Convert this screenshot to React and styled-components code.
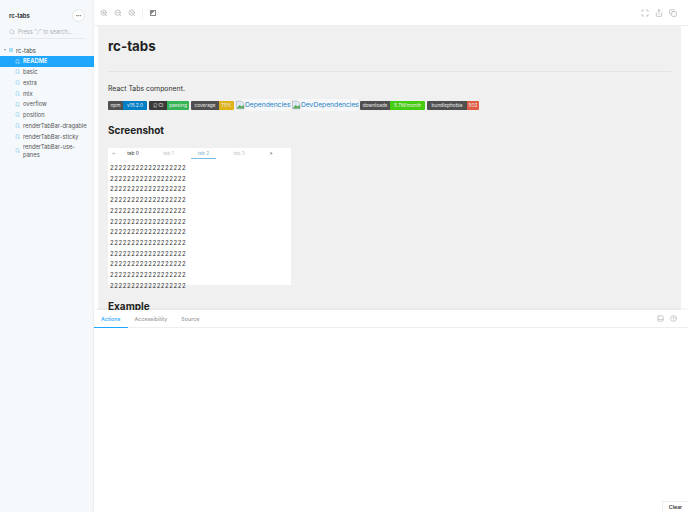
import React from 'react';
import styled, { createGlobalStyle } from 'styled-components';
import { ZoomIn, ZoomOut, SearchX, Maximize, Share, Copy, PanelBottom, CircleHelp, Search, Bookmark, Github } from 'lucide-react';

const Global = createGlobalStyle`
  html, body { margin: 0; padding: 0; background: #fff; }
  * { box-sizing: border-box; }
  body { font-family: "Inter", "Liberation Sans", sans-serif; color: #333; }
`;

const Root = styled.div`
  width: 688px;
  height: 512px;
  display: flex;
  overflow: hidden;
`;

const Sidebar = styled.aside`
  width: 94px;
  flex: none;
  background: #f6f9fc;
  display: flex;
  flex-direction: column;
`;

const Brand = styled.div`
  display: flex;
  align-items: center;
  justify-content: space-between;
  padding: 8px 9px 0 9px;
  height: 23px;
  font-size: 5.8px;
  font-weight: 700;
  color: #333;
`;

const MenuDot = styled.div`
  width: 13px;
  height: 13px;
  border-radius: 50%;
  background: #fff;
  border: 1px solid #e2e5e8;
  display: flex;
  align-items: center;
  justify-content: center;
  font-size: 4px;
  font-weight: 700;
  line-height: 1;
  color: #777;
`;

const SearchBox = styled.div`
  margin: 3px 9px 0 9px;
  height: 13px;
  border-bottom: 1px solid #e6e9ec;
  display: flex;
  align-items: center;
  gap: 3px;
  font-size: 5.6px;
  color: #aab0b5;
`;

const Tree = styled.div`
  margin-top: 6px;
  display: flex;
  flex-direction: column;
`;

const TreeRoot = styled.div`
  height: 10.75px;
  display: flex;
  align-items: center;
  padding-left: 4px;
  gap: 2px;
  font-size: 5.8px;
  color: #444;
`;

const Caret = styled.span`
  width: 0;
  height: 0;
  border-left: 1.5px solid transparent;
  border-right: 1.5px solid transparent;
  border-top: 2px solid #999;
`;

const Square = styled.span`
  width: 4px;
  height: 4px;
  margin: 0 1px;
  background: #a6dcf5;
`;

const TreeItem = styled.div`
  min-height: 10.75px;
  display: flex;
  align-items: center;
  gap: 3px;
  padding: ${p => (p.$wrap ? '1.5px 5px 1.5px 15px' : '0 0 0 15px')};
  font-size: 5.8px;
  line-height: 7.4px;
  white-space: ${p => (p.$wrap ? 'normal' : 'nowrap')};
  background: ${p => (p.$active ? '#1ea7fd' : 'transparent')};
  color: ${p => (p.$active ? '#fff' : '#555')};
  font-weight: ${p => (p.$active ? 600 : 400)};
  svg { flex: none; color: ${p => (p.$active ? '#fff' : '#62bfe8')}; }
`;

const Main = styled.main`
  flex: 1;
  min-width: 0;
  display: flex;
  flex-direction: column;
  background: #fff;
  box-shadow: 0 0 3px rgba(0, 0, 0, 0.08);
`;

const Toolbar = styled.div`
  height: 26px;
  flex: none;
  display: flex;
  align-items: center;
  justify-content: space-between;
  padding: 0 11px 0 6px;
  border-bottom: 1px solid #eee;
`;

const IconGroup = styled.div`
  display: flex;
  align-items: center;
  gap: 6px;
  color: #aaa;
`;

const Divider = styled.span`
  width: 1px;
  height: 10px;
  margin: 0 1px 0 0;
  background: #f3f3f3;
`;

const BgIcon = styled.span`
  width: 6px;
  height: 6px;
  border: 1px solid #888;
  background: linear-gradient(135deg, #888 50%, #fff 50%);
`;

const PreviewWrap = styled.div`
  flex: 1;
  min-height: 0;
  padding-left: 4px;
  padding-right: 7px;
`;

const Preview = styled.div`
  height: 100%;
  background: #f0f0f0;
  padding: 0 10px;
  overflow: hidden;
  color: #222;
`;

const Title = styled.h1`
  margin: 0;
  padding-top: 10px;
  padding-bottom: 15px;
  font-size: 13.3px;
  line-height: 20px;
  font-weight: 700;
  border-bottom: 1px solid #e4e4e4;
`;

const Intro = styled.p`
  margin: 12px 0 0;
  font-size: 6.9px;
  line-height: 10px;
  color: #333;
`;

const BadgeRow = styled.div`
  margin-top: 6px;
  height: 10px;
  display: flex;
  align-items: center;
  gap: 2px;
`;

const Badge = styled.div`
  display: flex;
  height: 9px;
  font-size: 4.8px;
  line-height: 9px;
  border-radius: 1px;
  overflow: hidden;
  color: #eee;
  white-space: nowrap;
`;

const BadgeLabel = styled.span`
  width: ${p => p.$w}px;
  background: ${p => p.$dark ? '#3a3a3a' : '#505050'};
  text-align: center;
  display: flex;
  align-items: center;
  justify-content: center;
  gap: 1px;
`;

const BadgeValue = styled.span`
  width: ${p => p.$w}px;
  background: ${p => p.$color};
  text-align: center;
`;

const BrokenLink = styled.a`
  display: flex;
  align-items: center;
  width: ${p => p.$w}px;
  height: 12px;
  flex: none;
  background: #f6f7f8;
  color: #1b7fc4;
  font-size: 6.7px;
  line-height: 12px;
  white-space: nowrap;
  svg { flex: none; }
`;

const Heading = styled.h2`
  margin: ${p => p.$top}px 0 0;
  font-size: 10px;
  line-height: 15px;
  font-weight: 700;
`;

const Shot = styled.div`
  margin-top: 10px;
  width: 183px;
  height: 137px;
  background: #fff;
`;

const ShotTabs = styled.div`
  height: 11px;
  display: flex;
  align-items: flex-start;
  padding-top: 2px;
  font-size: 4.8px;
  line-height: 6px;
`;

const ShotTab = styled.span`
  width: ${p => p.$w}px;
  height: 9px;
  text-align: center;
  color: ${p => p.$color};
  border-bottom: ${p => (p.$active ? '1px solid #7cbbe0' : 'none')};
`;

const ShotBody = styled.div`
  margin-top: 4px;
  padding-left: 2px;
`;

const DigitRow = styled.div`
  height: 10.72px;
  font-size: 6px;
  line-height: 10.72px;
  letter-spacing: 0.58px;
  color: #333;
  white-space: nowrap;
`;

const Panel = styled.section`
  height: 202px;
  flex: none;
  background: #fff;
  display: flex;
  flex-direction: column;
  box-shadow: 0 -1px 2px rgba(0, 0, 0, 0.05);
  position: relative;
`;

const PanelBar = styled.div`
  height: 18px;
  flex: none;
  display: flex;
  align-items: center;
  justify-content: space-between;
  padding-right: 11px;
  border-bottom: 1px solid #eee;
`;

const PanelTabs = styled.div`
  display: flex;
  height: 100%;
`;

const PanelTab = styled.div`
  padding: 0 7px;
  height: 18px;
  display: flex;
  align-items: center;
  font-size: 5.4px;
  font-weight: 500;
  color: ${p => (p.$active ? '#1ea7fd' : '#999')};
  border-bottom: ${p => (p.$active ? '1px solid #1ea7fd' : 'none')};
`;

const ClearButton = styled.button`
  position: absolute;
  right: 0;
  bottom: 0;
  width: 26px;
  height: 11px;
  padding: 0;
  border: 0;
  border-top: 1px solid #eee;
  border-left: 1px solid #eee;
  background: #fff;
  font: 600 5.2px "Inter", sans-serif;
  color: #333;
`;

const BrokenIcon = () => (
  <svg width="9" height="10" viewBox="0 0 9 10">
    <path d="M0.5 1h5l2.5 2.5V9H0.5z" fill="#dfe8f2" stroke="#9aa5b0" strokeWidth="0.6" />
    <path d="M1 8l2.5-3 2 1.5L8 5v3.6H1z" fill="#5aa85a" />
  </svg>
);

const navItems = ['basic', 'extra', 'mix', 'overflow', 'position', 'renderTabBar-dragable', 'renderTabBar-sticky'];
const digits = '2'.repeat(18);

export default function App() {
  return (
    <Root>
      <Global />
      <Sidebar>
        <Brand>
          <span>rc-tabs</span>
          <MenuDot>•••</MenuDot>
        </Brand>
        <SearchBox>
          <Search size={6} />
          <span>Press "/" to search...</span>
        </SearchBox>
        <Tree>
          <TreeRoot>
            <Caret />
            <Square />
            <span>rc-tabs</span>
          </TreeRoot>
          <TreeItem $active>
            <Bookmark size={5} />
            <span>README</span>
          </TreeItem>
          {navItems.map(name => (
            <TreeItem key={name}>
              <Bookmark size={5} />
              <span>{name}</span>
            </TreeItem>
          ))}
          <TreeItem $wrap>
            <Bookmark size={5} />
            <span>renderTabBar-use-panes</span>
          </TreeItem>
        </Tree>
      </Sidebar>
      <Main>
        <Toolbar>
          <IconGroup>
            <ZoomIn size={8} />
            <ZoomOut size={8} />
            <SearchX size={8} />
            <Divider />
            <BgIcon />
          </IconGroup>
          <IconGroup>
            <Maximize size={8} />
            <Share size={8} />
            <Copy size={8} />
          </IconGroup>
        </Toolbar>
        <PreviewWrap>
          <Preview>
            <Title>rc-tabs</Title>
            <Intro>React Tabs component.</Intro>
            <BadgeRow>
              <Badge>
                <BadgeLabel $w={15}>npm</BadgeLabel>
                <BadgeValue $w={24} $color="#007ec6">v15.2.0</BadgeValue>
              </Badge>
              <Badge>
                <BadgeLabel $w={18} $dark>
                  <Github size={5} />
                  CI
                </BadgeLabel>
                <BadgeValue $w={22} $color="#34b455">passing</BadgeValue>
              </Badge>
              <Badge>
                <BadgeLabel $w={28}>coverage</BadgeLabel>
                <BadgeValue $w={15} $color="#dfb317">75%</BadgeValue>
              </Badge>
              <BrokenLink $w={54}>
                <BrokenIcon />
                Dependencies
              </BrokenLink>
              <BrokenLink $w={66}>
                <BrokenIcon />
                DevDependencies
              </BrokenLink>
              <Badge>
                <BadgeLabel $w={30}>downloads</BadgeLabel>
                <BadgeValue $w={35} $color="#4c1">5.7M/month</BadgeValue>
              </Badge>
              <Badge>
                <BadgeLabel $w={40}>bundlephobia</BadgeLabel>
                <BadgeValue $w={12} $color="#e05d44">502</BadgeValue>
              </Badge>
            </BadgeRow>
            <Heading $top={13}>Screenshot</Heading>
            <Shot>
              <ShotTabs>
                <ShotTab $w={12} $color="#bbb">←</ShotTab>
                <ShotTab $w={26} $color="#333">tab 0</ShotTab>
                <ShotTab $w={45} $color="#c4c4c4">tab 1</ShotTab>
                <ShotTab $w={25} $color="#7fb5d5" $active>tab 2</ShotTab>
                <ShotTab $w={46} $color="#c4c4c4">tab 3</ShotTab>
                <ShotTab $w={18} $color="#333">&gt;</ShotTab>
              </ShotTabs>
              <ShotBody>
                {Array.from({ length: 12 }, (_, i) => (
                  <DigitRow key={i}>{digits}</DigitRow>
                ))}
              </ShotBody>
            </Shot>
            <Heading $top={14}>Example</Heading>
          </Preview>
        </PreviewWrap>
        <Panel>
          <PanelBar>
            <PanelTabs>
              <PanelTab $active>Actions</PanelTab>
              <PanelTab>Accessibility</PanelTab>
              <PanelTab>Source</PanelTab>
            </PanelTabs>
            <IconGroup>
              <PanelBottom size={7} />
              <CircleHelp size={7} />
            </IconGroup>
          </PanelBar>
          <ClearButton>Clear</ClearButton>
        </Panel>
      </Main>
    </Root>
  );
}
